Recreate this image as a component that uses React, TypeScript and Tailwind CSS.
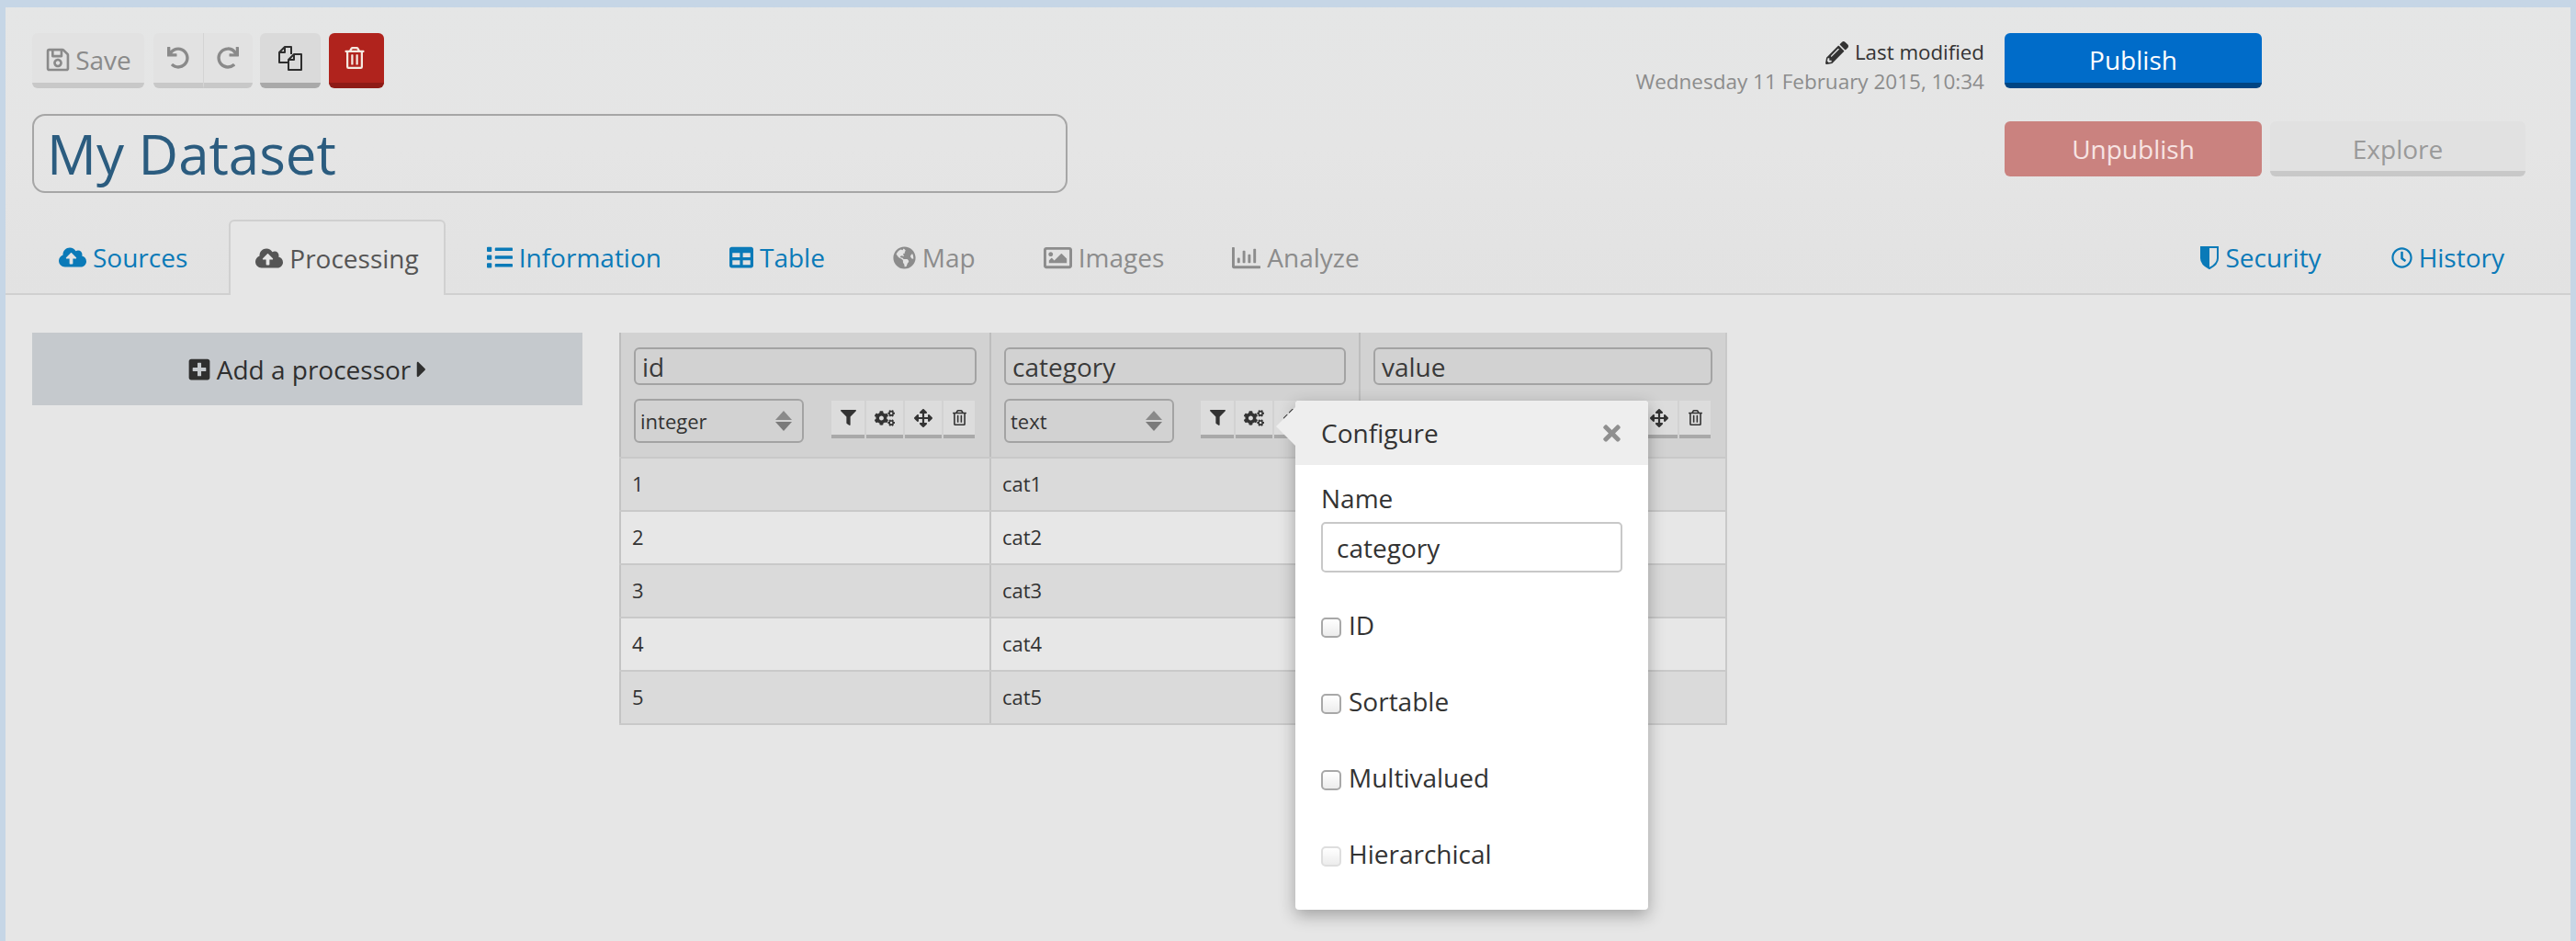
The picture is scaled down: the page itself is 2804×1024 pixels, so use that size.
import { ReactNode } from "react";
import {
  FaArrowsAlt,
  FaCaretRight,
  FaCloudUploadAlt,
  FaCogs,
  FaFilter,
  FaGlobeAmericas,
  FaList,
  FaPencilAlt,
  FaPlusSquare,
  FaRedo,
  FaRegChartBar,
  FaRegClock,
  FaRegImage,
  FaRegSave,
  FaRegTrashAlt,
  FaTable,
  FaTimes,
  FaUndo,
} from "react-icons/fa";

const CopyIcon = () => (
  <svg width="28" height="29" viewBox="0 0 28 29" fill="none" stroke="currentColor" strokeWidth="2" strokeLinejoin="round">
    <path d="M12 19H2V8l6-6h7v8" />
    <path d="M8 2v6H2" />
    <path d="M12 27V16l6-6h8v17z" />
    <path d="M18 10v6h-6" />
  </svg>
);

const HalfShield = () => (
  <svg width="20" height="25" viewBox="0 0 20 25">
    <path d="M1 1h18v12c0 5-4 8.500-9 11C5 21.500 1 18 1 13z" fill="none" stroke="currentColor" strokeWidth="2" />
    <path d="M1 1h9v23C5 21.500 1 18 1 13z" fill="currentColor" />
  </svg>
);

const Tab = ({ icon, label, active, muted }: { icon: ReactNode; label: string; active?: boolean; muted?: boolean }) => {
  const tone = active ? "text-[#555555]" : muted ? "text-[#8c8c8c]" : "text-[#0a7ab8]";
  return (
    <div
      className={`px-[27px] flex items-center gap-[7px] text-[28px] rounded-t-[6px] border-x-2 border-t-2 ${tone} ${
        active ? "h-[82px] bg-[#e6e6e6] border-[#d0d0d0]" : "h-[80px] border-transparent"
      }`}
    >
      {icon}
      <span>{label}</span>
    </div>
  );
};

const ToolButton = ({ width, children }: { width: string; children: ReactNode }) => (
  <div className={`${width} h-[41px] bg-[#dcdcdc] border-b-4 border-[#a9a9a9] flex items-center justify-center`}>
    {children}
  </div>
);

const ColumnHeader = ({ name, type }: { name: string; type?: string }) => (
  <div className="px-[14px] pt-[16px] h-[135px] border-l-2 border-[#bdbdbd]">
    <div className="h-[41px] rounded-[6px] border-2 border-[#a3a3a3] text-[28px] text-[#3a3a3a] px-[7px] flex items-center">
      {name}
    </div>
    <div className="mt-[15px] flex justify-between">
      {type ? (
        <div className="w-[185px] h-[48px] rounded-[6px] border-2 border-[#a3a3a3] text-[22px] text-[#333333] pl-[5px] pr-[11px] flex items-center justify-between">
          <span>{type}</span>
          <span className="flex flex-col gap-[2px]">
            <span className="w-0 h-0 border-x-[9px] border-x-transparent border-b-[10px] border-b-[#8a8a8a]" />
            <span className="w-0 h-0 border-x-[9px] border-x-transparent border-t-[10px] border-t-[#7a7a7a]" />
          </span>
        </div>
      ) : (
        <div />
      )}
      <div className="mt-[2px] mr-[2px] flex gap-[2px] text-[#333333]">
        <ToolButton width="w-[36px]"><FaFilter size={17} /></ToolButton>
        <ToolButton width="w-[40px]"><FaCogs size={22} /></ToolButton>
        <ToolButton width="w-[40px]"><FaArrowsAlt size={20} /></ToolButton>
        <ToolButton width="w-[34px]"><FaRegTrashAlt size={17} /></ToolButton>
      </div>
    </div>
  </div>
);

const rows = ["cat1", "cat2", "cat3", "cat4", "cat5"];

const Option = ({ label, disabled }: { label: string; disabled?: boolean }) => (
  <label className="flex items-center h-[40px] gap-[8px] text-[28px] text-[#333333]">
    <input
      type="checkbox"
      disabled={disabled}
      className={`appearance-none w-[22px] h-[22px] mt-[6px] rounded-[5px] border-2 bg-gradient-to-b from-white to-[#ececec] ${
        disabled ? "border-[#dedede]" : "border-[#a8a8a8]"
      }`}
    />
    {label}
  </label>
);

const Popover = () => (
  <div className="absolute left-[736px] top-[74px] w-[384px] h-[554px] bg-white rounded-[4px] shadow-[0_6px_18px_rgba(0,0,0,0.3)]">
    <div className="absolute -left-[21px] top-[7px] w-0 h-0 border-y-[21px] border-y-transparent border-r-[21px] border-r-[#eeeeee]" />
    <div className="h-[70px] bg-[#eeeeee] rounded-t-[4px] pl-[28px] pr-[26px] flex items-center justify-between text-[28px] text-[#333333]">
      <span>Configure</span>
      <FaTimes size={27} className="text-[#8f8f8f]" />
    </div>
    <div className="px-[28px] pt-[17px]">
      <div className="text-[28px] leading-[38px] text-[#333333]">Name</div>
      <div className="mt-[7px] w-[328px] h-[55px] rounded-[5px] border-2 border-[#c8c8c8] pl-[15px] flex items-center text-[28px] text-[#333333]">
        category
      </div>
      <div className="mt-[37px] flex flex-col gap-[43px]">
        <Option label="ID" />
        <Option label="Sortable" />
        <Option label="Multivalued" />
        <Option label="Hierarchical" disabled />
      </div>
    </div>
  </div>
);

export default function App() {
  return (
    <div className="w-[2804px] h-[1024px] overflow-hidden bg-[#c6d6e6] pt-[8px] px-[6px] font-['Open_Sans',sans-serif]">
      <div className="h-[1016px] bg-[#e6e6e6] rounded-t-[8px]">
        <div className="h-[313px] bg-gradient-to-b from-[#e5e6e6] via-[#e5e5e5] to-[#e2e2e2] border-b-2 border-[#d0d0d0]">
          <div className="flex justify-between pl-[29px] pr-[49px] pt-[28px] h-[202px]">
            <div className="w-[1127px]">
              <div className="flex h-[60px]">
                <div className="w-[122px] pt-[4px] bg-[#e2e2e2] border-b-[6px] border-[#c8c8c8] rounded-[6px] text-[#8a8a8a] text-[28px] flex items-center justify-center gap-[5px]">
                  <FaRegSave size={28} />
                  Save
                </div>
                <div className="ml-[10px] w-[108px] flex text-[#8a8a8a]">
                  <div className="flex-1 bg-[#e2e2e2] border-b-[6px] border-[#c8c8c8] rounded-l-[6px] border-r border-r-[#d4d4d4] flex items-center justify-center">
                    <FaUndo size={24} />
                  </div>
                  <div className="flex-1 bg-[#e2e2e2] border-b-[6px] border-[#c8c8c8] rounded-r-[6px] flex items-center justify-center">
                    <FaRedo size={24} />
                  </div>
                </div>
                <div className="ml-[8px] w-[66px] bg-[#dadada] border-b-[6px] border-[#a9a9a9] rounded-[6px] flex items-center justify-center text-[#2e2e2e]">
                  <CopyIcon />
                </div>
                <div className="ml-[9px] w-[60px] pr-[5px] bg-[#b0231d] border-b-[6px] border-[#8e1b16] rounded-[6px] flex items-center justify-center text-[#f5e9e0]">
                  <FaRegTrashAlt size={24} />
                </div>
              </div>
              <div className="mt-[28px] h-[86px] rounded-[14px] border-2 border-[#a6a6a6] pl-[14px] flex items-center text-[60px] text-[#2b5c7f]">
                My Dataset
              </div>
            </div>
            <div className="flex flex-col items-end">
              <div className="flex h-[60px] items-start">
                <div className="mr-[22px] text-right pt-[5px]">
                  <div className="text-[22.3px] leading-[32px] text-[#333333] flex items-center justify-end gap-[7px]">
                    <FaPencilAlt size={25} />
                    Last modified
                  </div>
                  <div className="text-[22.5px] leading-[32px] text-[#8c8c8c]">Wednesday 11 February 2015, 10:34</div>
                </div>
                <div className="w-[280px] h-[60px] pt-[4px] bg-[#006cc9] border-b-[6px] border-[#004583] rounded-[6px] text-white text-[28px] flex items-center justify-center mr-[287px]">
                  Publish
                </div>
              </div>
              <div className="mt-[36px] flex gap-[9px]">
                <div className="w-[280px] h-[60px] bg-[#ca827f] rounded-[6px] text-[#f7e4e3] text-[28px] flex items-center justify-center">
                  Unpublish
                </div>
                <div className="w-[278px] h-[60px] pt-[6px] bg-[#e1e1e1] border-b-[6px] border-[#c8c8c8] rounded-[6px] text-[#9a9a9a] text-[28px] flex items-center justify-center">
                  Explore
                </div>
              </div>
            </div>
          </div>
          <div className="mt-[29px] flex justify-between pl-[29px] pr-[43px] items-start">
            <div className="flex gap-[16px]">
              <Tab icon={<FaCloudUploadAlt size={30} />} label="Sources" />
              <Tab icon={<FaCloudUploadAlt size={30} />} label="Processing" active />
              <Tab icon={<FaList size={28} />} label="Information" />
              <Tab icon={<FaTable size={26} />} label="Table" />
              <Tab icon={<FaGlobeAmericas size={25} />} label="Map" muted />
              <Tab icon={<FaRegImage size={31} />} label="Images" muted />
              <Tab icon={<FaRegChartBar size={31} />} label="Analyze" muted />
            </div>
            <div className="flex gap-[18px]">
              <Tab icon={<HalfShield />} label="Security" />
              <Tab icon={<FaRegClock size={23} />} label="History" />
            </div>
          </div>
        </div>
        <div className="flex items-start gap-[40px] pl-[29px] pt-[41px]">
          <div className="w-[599px] h-[79px] bg-[#c5c9cd] flex items-center justify-center gap-[6px] text-[28px] text-[#2f2f2f]">
            <FaPlusSquare size={26} />
            <span>Add a processor</span>
            <FaCaretRight size={28} className="-mx-[8px]" />
          </div>
          <div className="relative w-[1206px]">
            <div className="grid grid-cols-[403px_402px_1fr] bg-[#d2d2d2] border-b-2 border-r-2 border-[#c9c9c9]">
              <ColumnHeader name="id" type="integer" />
              <ColumnHeader name="category" type="text" />
              <ColumnHeader name="value" />
            </div>
            {rows.map((cat, i) => (
              <div
                key={cat}
                className={`grid grid-cols-[403px_402px_1fr] h-[58px] border-b-2 border-r-2 border-[#c9c9c9] text-[22px] text-[#333333] ${
                  i % 2 === 0 ? "bg-[#dadada]" : "bg-[#e7e7e7]"
                }`}
              >
                <div className="px-[12px] pb-[2px] flex items-center border-l-2 border-[#c4c4c4]">{i + 1}</div>
                <div className="px-[12px] pb-[2px] flex items-center border-l-2 border-[#c4c4c4]">{cat}</div>
                <div className="border-l-2 border-[#c4c4c4]" />
              </div>
            ))}
            <Popover />
          </div>
        </div>
      </div>
    </div>
  );
}
